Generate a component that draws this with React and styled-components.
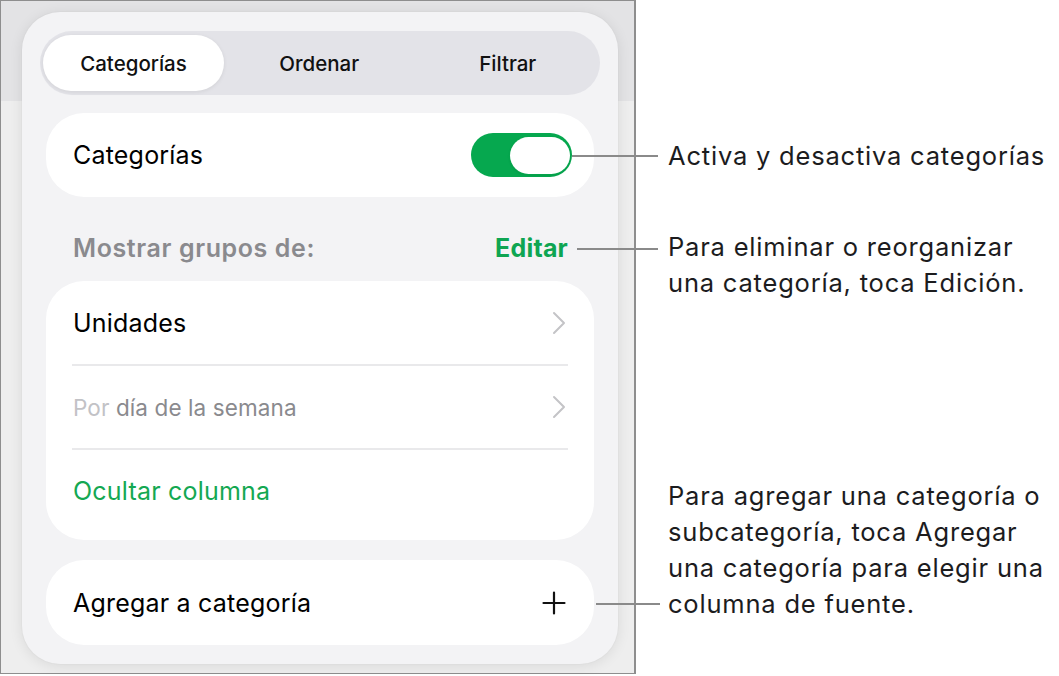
import React from "react";
import styled, { createGlobalStyle } from "styled-components";

const Global = createGlobalStyle`
  html, body { margin: 0; padding: 0; background: #ffffff; }
  body { font-family: Inter, "Noto Sans", "Liberation Sans", sans-serif; -webkit-font-smoothing: antialiased; }
  * { box-sizing: border-box; }
`;

const Page = styled.div`
  position: relative;
  display: flex;
  width: 1059px;
  height: 676px;
  background: #ffffff;
`;

const Screen = styled.div`
  width: 636px;
  height: 674px;
  border: 1px solid #8e8e8e;
  border-right-width: 2px;
  background: linear-gradient(#e3e3e5 0 100px, #eeeeee 100px);
  padding: 11px 0 0 21px;
  flex-shrink: 0;
`;

const Panel = styled.div`
  width: 596px;
  height: 652px;
  border-radius: 38px;
  background: #f3f3f5;
  box-shadow: 0 2px 14px rgba(0, 0, 0, 0.09), 0 0 0 1px rgba(0, 0, 0, 0.015);
  padding: 19px 0 0 18px;
  display: flex;
  flex-direction: column;
`;

const Segmented = styled.div`
  width: 560px;
  height: 64px;
  border-radius: 32px;
  background: #e3e3e8;
  padding: 4px 3px;
  display: grid;
  grid-template-columns: 181px 1fr 1fr;
  margin-bottom: 18px;
`;

const Segment = styled.div`
  display: flex;
  align-items: center;
  justify-content: center;
  border-radius: 28px;
  font-size: 20.5px;
  font-weight: 500;
  color: #111;
  letter-spacing: 0;
  background: ${(p) => (p.$active ? "#ffffff" : "transparent")};
  box-shadow: ${(p) => (p.$active ? "0 1px 4px rgba(0,0,0,0.08)" : "none")};
  padding-left: ${(p) => p.$shift || 0}px;
`;

const Card = styled.div`
  width: 548px;
  margin-left: 6px;
  background: #ffffff;
  border-radius: 38px;
  padding-bottom: ${(p) => p.$padBottom || 0}px;
`;

const Row = styled.div`
  height: ${(p) => p.$h || 84}px;
  display: flex;
  align-items: center;
  justify-content: space-between;
  padding: 0 ${(p) => p.$right || 22}px 0 27px;
`;

const Separator = styled.div`
  height: 2px;
  background: #e9e9eb;
  margin: -1px 26px;
`;

const Label = styled.span`
  font-size: 25px;
  color: ${(p) => p.$color || "#000"};
  letter-spacing: 0.2px;
`;

const SubLabel = styled.span`
  font-size: 22.5px;
  color: #8a8a8e;
  letter-spacing: 0.1px;
`;

const Faint = styled.span`
  color: #c2c2c6;
`;

const Toggle = styled.div`
  width: 101px;
  height: 44px;
  border-radius: 22px;
  background: #06a84f;
  display: flex;
  justify-content: flex-end;
  align-items: center;
  padding: 0 2px;
`;

const Knob = styled.div`
  width: 60px;
  height: 37px;
  border-radius: 19px;
  background: #ffffff;
  box-shadow: 0 0 0 1px rgba(6, 168, 79, 0.6), 0 1px 3px rgba(0, 0, 0, 0.12);
`;

const Header = styled.div`
  height: 84px;
  display: flex;
  align-items: center;
  justify-content: space-between;
  padding: 17px 32px 0 33px;
  width: 560px;
`;

const HeaderTitle = styled.span`
  font-size: 25px;
  font-weight: 600;
  color: #8a8a8e;
  letter-spacing: 0.6px;
`;

const HeaderAction = styled.span`
  font-size: 25px;
  font-weight: 700;
  color: #0ea552;
  letter-spacing: 0.2px;
`;

const Gap = styled.div`
  height: ${(p) => p.$h}px;
`;

const Callouts = styled.div`
  display: flex;
  flex-direction: column;
  padding-left: 32px;
`;

const Callout = styled.div`
  margin-top: ${(p) => p.$top}px;
  font-size: 25.5px;
  line-height: 36px;
  color: #1c1c1e;
  letter-spacing: 0.8px;
  white-space: nowrap;
`;

const Leader = styled.div`
  position: absolute;
  height: 2px;
  background: #8a8a8a;
`;

const Chevron = () => (
  <svg width="14" height="24" viewBox="0 0 14 24" fill="none">
    <polyline points="2,2 12,12 2,22" stroke="#c4c4c7" strokeWidth="2" strokeLinecap="round" strokeLinejoin="round" />
  </svg>
);

const Plus = () => (
  <svg width="24" height="24" viewBox="0 0 24 24" fill="none">
    <path d="M12 1.5V22.5M1.5 12H22.5" stroke="#111" strokeWidth="2.2" strokeLinecap="round" />
  </svg>
);

export default function App() {
  return (
    <>
      <Global />
      <Page>
        <Screen>
          <Panel>
            <Segmented>
              <Segment $active>Categorías</Segment>
              <Segment $shift={4}>Ordenar</Segment>
              <Segment $shift={8}>Filtrar</Segment>
            </Segmented>
            <Card>
              <Row $h={84} $right={22}>
                <Label>Categorías</Label>
                <Toggle>
                  <Knob />
                </Toggle>
              </Row>
            </Card>
            <Header>
              <HeaderTitle>Mostrar grupos de:</HeaderTitle>
              <HeaderAction>Editar</HeaderAction>
            </Header>
            <Card $padBottom={7}>
              <Row $right={28}>
                <Label>Unidades</Label>
                <Chevron />
              </Row>
              <Separator />
              <Row $right={28}>
                <SubLabel>
                  <Faint>Por</Faint> día de la semana
                </SubLabel>
                <Chevron />
              </Row>
              <Separator />
              <Row>
                <Label $color="#14a852">Ocultar columna</Label>
              </Row>
            </Card>
            <Gap $h={20} />
            <Card>
              <Row $h={85} $right={28}>
                <Label>Agregar a categoría</Label>
                <Plus />
              </Row>
            </Card>
          </Panel>
        </Screen>
        <Callouts>
          <Callout $top={138}>Activa y desactiva categorías</Callout>
          <Callout $top={55}>
            Para eliminar o reorganizar
            <br />
            una categoría, toca Edición.
          </Callout>
          <Callout $top={177}>
            Para agregar una categoría o
            <br />
            subcategoría, toca Agregar
            <br />
            una categoría para elegir una
            <br />
            columna de fuente.
          </Callout>
        </Callouts>
        <Leader style={{ left: 572, top: 155, width: 86 }} />
        <Leader style={{ left: 577, top: 248, width: 81 }} />
        <Leader style={{ left: 596, top: 603, width: 64 }} />
      </Page>
    </>
  );
}
